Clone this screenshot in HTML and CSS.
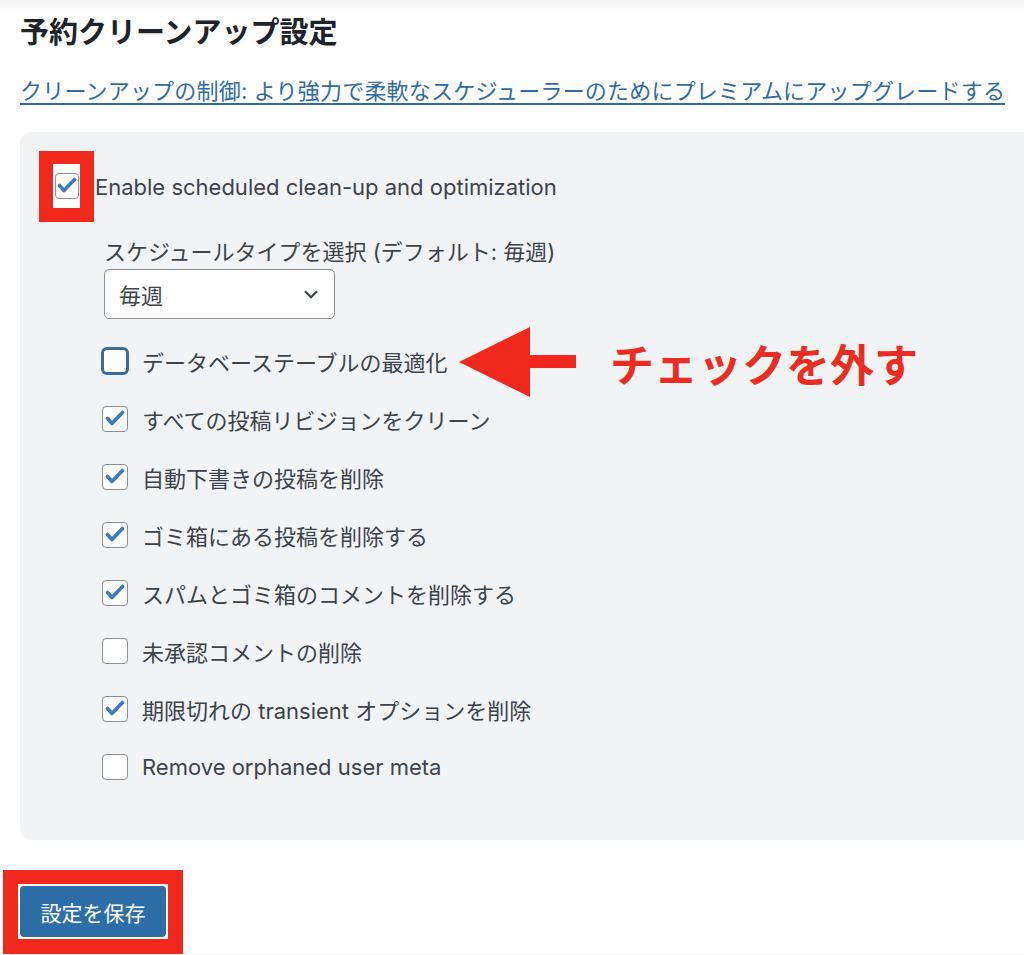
FILE: index.html
```html
<!DOCTYPE html>
<html lang="ja">
<head>
    <meta charset="UTF-8">
    <meta name="viewport" content="width=device-width, initial-scale=1.0">
    <title>予約クリーンアップ設定</title>
    <link rel="stylesheet" href="styles.css">
</head>
<body>
    <div class="page">
        <h2 class="title">予約クリーンアップ設定</h2>
        <a class="upgrade" href="#">クリーンアップの制御: より強力で柔軟なスケジューラーのためにプレミアムにアップグレードする</a>

        <div class="panel">
            <label class="enable-row">
                <span class="mark-box">
                    <span class="cb checked">
                        <svg viewBox="0 0 26 26"><path d="M5.5 12.5 10 17.5 20.5 6.5"/></svg>
                    </span>
                </span>
                <span class="enable-text">Enable scheduled clean-up and optimization</span>
            </label>

            <div class="schedule">
                <div class="schedule-label">スケジュールタイプを選択 (デフォルト: 毎週)</div>
                <div class="select">
                    <span>毎週</span>
                    <svg class="chevron" viewBox="0 0 20 20"><path d="M4.5 7.5 10 13l5.5-5.5" /></svg>
                </div>
            </div>

            <ul class="options">
                <li class="option">
                    <span class="cb focus"></span>
                    <span>データベーステーブルの最適化</span>
                    <div class="note">
                        <svg class="arrow" viewBox="0 0 118 70"><polygon points="0,35 71,0 71,70"/><rect x="70" y="28" width="47" height="13"/></svg>
                        <span class="note-text">チェックを外す</span>
                    </div>
                </li>
                <li class="option">
                    <span class="cb checked"><svg viewBox="0 0 26 26"><path d="M5.5 12.5 10 17.5 20.5 6.5"/></svg></span>
                    <span>すべての投稿リビジョンをクリーン</span>
                </li>
                <li class="option">
                    <span class="cb checked"><svg viewBox="0 0 26 26"><path d="M5.5 12.5 10 17.5 20.5 6.5"/></svg></span>
                    <span>自動下書きの投稿を削除</span>
                </li>
                <li class="option">
                    <span class="cb checked"><svg viewBox="0 0 26 26"><path d="M5.5 12.5 10 17.5 20.5 6.5"/></svg></span>
                    <span>ゴミ箱にある投稿を削除する</span>
                </li>
                <li class="option">
                    <span class="cb checked"><svg viewBox="0 0 26 26"><path d="M5.5 12.5 10 17.5 20.5 6.5"/></svg></span>
                    <span>スパムとゴミ箱のコメントを削除する</span>
                </li>
                <li class="option">
                    <span class="cb"></span>
                    <span>未承認コメントの削除</span>
                </li>
                <li class="option">
                    <span class="cb checked"><svg viewBox="0 0 26 26"><path d="M5.5 12.5 10 17.5 20.5 6.5"/></svg></span>
                    <span>期限切れの transient オプションを削除</span>
                </li>
                <li class="option">
                    <span class="cb"></span>
                    <span>Remove orphaned user meta</span>
                </li>
            </ul>
        </div>

        <div class="save-box">
            <button class="save">設定を保存</button>
        </div>
    </div>
</body>
</html>
```

FILE: styles.css
```css
body {
    margin: 0;
    background: linear-gradient(#f3f4f5, #ffffff 14px);
    font-family: 'Inter', 'Noto Sans CJK JP', sans-serif;
    color: #3c434a;
    font-size: 22px;
}
.page {
    padding-left: 20px;
}
.title {
    margin: 0;
    padding-top: 17px;
    font-size: 29px;
    line-height: 32px;
    font-weight: 700;
    color: #1d2327;
}
.upgrade {
    display: block;
    margin-top: 28px;
    line-height: 28px;
    color: #2f6c9e;
    text-decoration: underline;
    text-underline-offset: 4px;
    white-space: nowrap;
    letter-spacing: 0.2px;
}
.panel {
    margin-top: 27px;
    background: #f2f3f5;
    border-radius: 12px 0 0 12px;
    padding: 19px 0 44px 19px;
}
.enable-row {
    display: flex;
    align-items: center;
    gap: 1px;
}
.mark-box {
    display: flex;
    align-items: center;
    width: 27px;
    height: 44px;
    background: #ffffff;
    border: solid #f0291c;
    border-width: 13px 14px 14px 14px;
}
.mark-box .cb {
    margin-left: 2px;
    width: 24px;
    height: 26px;
}
.enable-text {
    line-height: 28px;
}
.schedule {
    padding-left: 65px;
}
.schedule-label {
    margin-top: 16px;
    line-height: 28px;
}
.select {
    margin-top: 3px;
    width: 231px;
    height: 50px;
    box-sizing: border-box;
    background: #ffffff;
    border: 1px solid #8c8f94;
    border-radius: 5px;
    display: flex;
    align-items: center;
    justify-content: space-between;
    padding: 0 12px 0 14px;
}
.chevron {
    width: 22px;
    height: 22px;
    fill: none;
    stroke: #3c434a;
    stroke-width: 2;
}
.options {
    list-style: none;
    margin: 13px 0 0;
    padding: 0 0 0 63px;
}
.option {
    position: relative;
    height: 58px;
    display: flex;
    align-items: center;
    gap: 14px;
}
.cb {
    width: 26px;
    height: 26px;
    box-sizing: border-box;
    background: #ffffff;
    border: 1px solid #8c8f94;
    border-radius: 4px;
    display: flex;
    align-items: center;
    justify-content: center;
    flex-shrink: 0;
}
.cb svg {
    width: 26px;
    height: 26px;
    flex-shrink: 0;
    fill: none;
    stroke: #3a7bbd;
    stroke-width: 3.6;
    stroke-linecap: round;
    stroke-linejoin: round;
}
.cb.focus {
    border: 2px solid #3a6d96;
    border-radius: 5px;
    box-shadow: 0 0 0 1px #3a6d96;
}
.note {
    position: absolute;
    left: 357px;
    top: -5px;
    display: flex;
    align-items: center;
    gap: 33px;
}
.arrow {
    width: 118px;
    height: 70px;
    fill: #f0291c;
}
.note-text {
    font-size: 44px;
    font-weight: 700;
    color: #ea2d20;
    font-family: 'Noto Sans CJK JP', sans-serif;
    line-height: 50px;
    margin-top: 2px;
}
.save-box {
    display: inline-block;
    margin: 30px 0 0 -17px;
    border: solid #f0291c;
    border-width: 14px 15px 15px 15px;
    padding: 2px;
    background: #ffffff;
}
.save {
    display: block;
    width: 146px;
    height: 51px;
    border: none;
    border-radius: 4px;
    background: #2c6ea8;
    color: #ffffff;
    font-family: 'Inter', 'Noto Sans CJK JP', sans-serif;
    font-size: 21px;
    cursor: pointer;
}
```
